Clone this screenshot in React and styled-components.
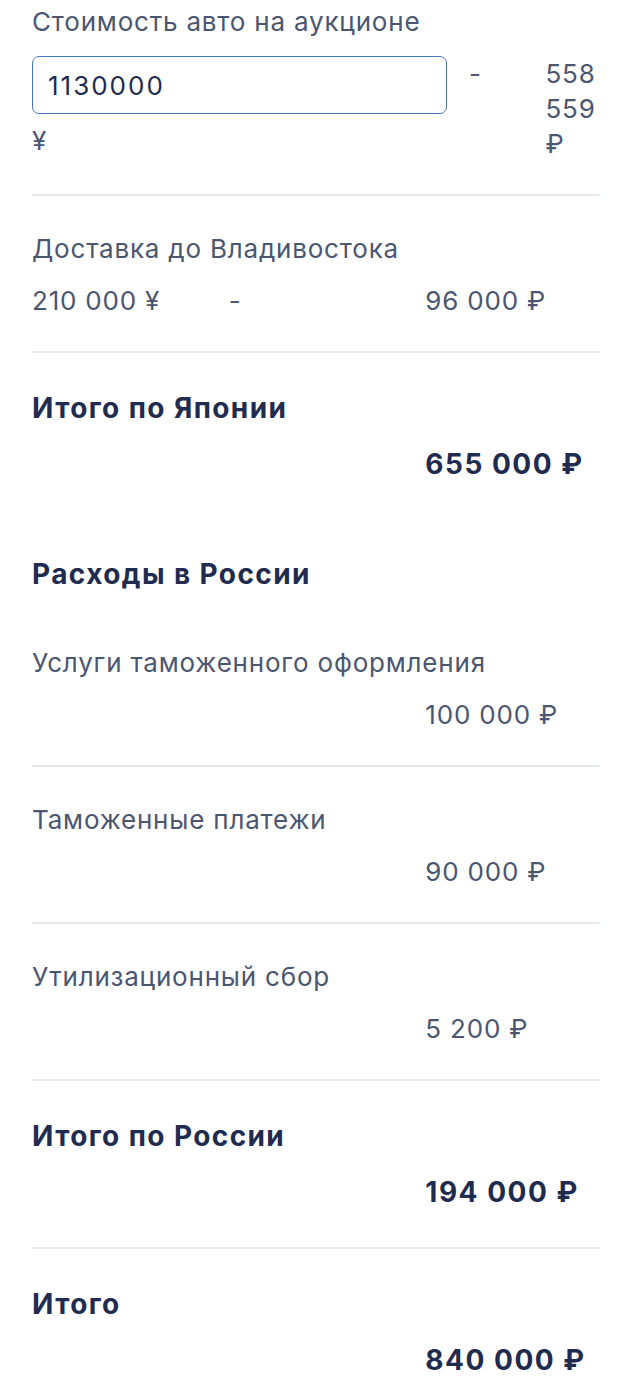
import React, { useState } from "react";
import styled, { createGlobalStyle } from "styled-components";

const labelColor = "#4b5670";
const strongColor = "#1f2c4f";
const lineColor = "#e3e9ef";

const GlobalStyle = createGlobalStyle`
  html, body {
    margin: 0;
    padding: 0;
    background: #ffffff;
  }
  body {
    font-family: Inter, "Noto Sans", "DejaVu Sans", sans-serif;
    -webkit-font-smoothing: antialiased;
  }
`;

const Page = styled.div`
  padding: 0 22px 0 32px;
  width: 568px;
`;

const Item = styled.div`
  padding: ${(p) => (p.$first ? "4px 0 33px" : "35px 0 33px")};
  border-bottom: ${(p) => (p.$noLine ? "none" : `2px solid ${lineColor}`)};
`;

const TotalItem = styled.div`
  padding: 36px 0 36px;
  border-bottom: ${(p) => (p.$noLine ? "none" : `2px solid ${lineColor}`)};
`;

const Heading = styled.h3`
  margin: 0;
  padding: 36px 0 17px;
  font-size: 28px;
  line-height: 38px;
  letter-spacing: 1.4px;
  font-weight: 700;
  color: ${strongColor};
`;

const Label = styled.div`
  font-size: 26px;
  line-height: 35px;
  letter-spacing: 0.8px;
  color: ${labelColor};
  margin-bottom: 17px;
`;

const Title = styled.div`
  font-size: 28px;
  line-height: 38px;
  letter-spacing: 1.4px;
  font-weight: 700;
  color: ${strongColor};
  margin-bottom: 18px;
`;

const Row = styled.div`
  display: flex;
  gap: 22px;
  font-size: ${(p) => (p.$bold ? "28px" : "26px")};
  line-height: ${(p) => (p.$bold ? "38px" : "35px")};
  letter-spacing: ${(p) => (p.$bold ? "1.5px" : "0.8px")};
  font-weight: ${(p) => (p.$bold ? 700 : 400)};
  color: ${(p) => (p.$bold ? strongColor : labelColor)};
`;

const Cell = styled.div`
  flex: 1 1 0;
`;

const PriceInput = styled.input`
  display: block;
  box-sizing: border-box;
  width: 415px;
  height: 58px;
  margin-bottom: 9px;
  padding: 0 15px;
  border: 1.5px solid #4a78b8;
  border-radius: 7px;
  font-family: inherit;
  font-size: 26px;
  letter-spacing: 2px;
  color: ${strongColor};
  background: #fff;
  outline: none;
`;

function ValueRow({ left, dash, right, bold }) {
  return (
    <Row $bold={bold}>
      <Cell>{left}</Cell>
      <Cell>{dash ? "-" : ""}</Cell>
      <Cell>{right}</Cell>
    </Row>
  );
}

export default function App() {
  const [price, setPrice] = useState("1130000");

  return (
    <>
      <GlobalStyle />
      <Page>
        <Item $first>
          <Label>Стоимость авто на аукционе</Label>
          <Row>
            <Cell>
              <PriceInput
                value={price}
                onChange={(e) => setPrice(e.target.value)}
              />
              ¥
            </Cell>
            <Cell>-</Cell>
            <Cell>558 559 ₽</Cell>
          </Row>
        </Item>

        <Item>
          <Label>Доставка до Владивостока</Label>
          <ValueRow left="210 000 ¥" dash right="96 000 ₽" />
        </Item>

        <TotalItem $noLine>
          <Title>Итого по Японии</Title>
          <ValueRow bold right="655 000 ₽" />
        </TotalItem>

        <Heading>Расходы в России</Heading>

        <Item>
          <Label>Услуги таможенного оформления</Label>
          <ValueRow right="100 000 ₽" />
        </Item>

        <Item>
          <Label>Таможенные платежи</Label>
          <ValueRow right="90 000 ₽" />
        </Item>

        <Item>
          <Label>Утилизационный сбор</Label>
          <ValueRow right="5 200 ₽" />
        </Item>

        <TotalItem>
          <Title>Итого по России</Title>
          <ValueRow bold right="194 000 ₽" />
        </TotalItem>

        <TotalItem $noLine>
          <Title>Итого</Title>
          <ValueRow bold right="840 000 ₽" />
        </TotalItem>
      </Page>
    </>
  );
}
